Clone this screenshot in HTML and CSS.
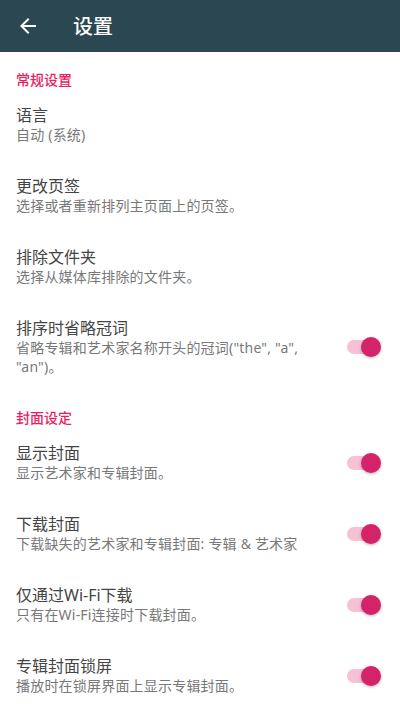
FILE: index.html
```html
<!DOCTYPE html>
<html lang="zh-CN">
<head>
<meta charset="utf-8">
<link rel="stylesheet" href="styles.css">
</head>
<body>
<header class="appbar">
  <svg class="back" width="24" height="24" viewBox="0 0 24 24"><path d="M20 11H7.83l5.59-5.59L12 4l-8 8 8 8 1.41-1.41L7.83 13H20v-2z" fill="#fff"/></svg>
  <h1 class="title">设置</h1>
</header>
<main class="list">
  <div class="section">常规设置</div>
  <div class="row"><div class="text"><div class="t">语言</div><div class="s">自动 (系统)</div></div></div>
  <div class="row"><div class="text"><div class="t">更改页签</div><div class="s">选择或者重新排列主页面上的页签。</div></div></div>
  <div class="row"><div class="text"><div class="t">排除文件夹</div><div class="s">选择从媒体库排除的文件夹。</div></div></div>
  <div class="row"><div class="text"><div class="t">排序时省略冠词</div><div class="s">省略专辑和艺术家名称开头的冠词("the", "a", "an")。</div></div><div class="switch"></div></div>
  <div class="section second">封面设定</div>
  <div class="row"><div class="text"><div class="t">显示封面</div><div class="s">显示艺术家和专辑封面。</div></div><div class="switch"></div></div>
  <div class="row"><div class="text"><div class="t">下载封面</div><div class="s">下载缺失的艺术家和专辑封面: 专辑 &amp; 艺术家</div></div><div class="switch"></div></div>
  <div class="row"><div class="text"><div class="t">仅通过Wi-Fi下载</div><div class="s">只有在Wi-Fi连接时下载封面。</div></div><div class="switch"></div></div>
  <div class="row"><div class="text"><div class="t">专辑封面锁屏</div><div class="s">播放时在锁屏界面上显示专辑封面。</div></div><div class="switch"></div></div>
</main>
</body>
</html>
```
FILE: styles.css
```css
html, body {
  margin: 0;
  padding: 0;
  background: #fff;
  font-family: "Noto Sans", "Noto Sans CJK SC", sans-serif;
  width: 400px;
  height: 720px;
  overflow: hidden;
}
.appbar {
  height: 52px;
  background: #2b4751;
  display: flex;
  align-items: center;
  padding-left: 16px;
  box-sizing: border-box;
}
.back {
  display: block;
  width: 24px;
  height: 24px;
}
.title {
  margin: 0 0 0 33px;
  color: #fff;
  font-size: 20px;
  font-weight: 500;
  line-height: 24px;
  font-family: "Noto Sans CJK SC", sans-serif;
}
.section {
  padding: 17px 16px 0;
  color: #e91e63;
  font-size: 14px;
  font-weight: 500;
  line-height: 20px;
  font-family: "Noto Sans CJK SC", sans-serif;
}
.section.second {
  padding-top: 15px;
}
.row {
  display: flex;
  align-items: center;
  padding: 16px 23px 16px 16px;
}
.text {
  flex: 1;
  padding-right: 31px;
  min-width: 0;
}
.t {
  color: #444;
  font-size: 16px;
  line-height: 20px;
}
.s {
  color: #787878;
  font-size: 14px;
  line-height: 19px;
  letter-spacing: 0.2px;
}
.switch {
  position: relative;
  width: 30px;
  height: 14px;
  border-radius: 7px;
  background: #f6c1d4;
  flex: none;
}
.switch::after {
  content: "";
  position: absolute;
  right: -4px;
  top: -3px;
  width: 20px;
  height: 20px;
  border-radius: 50%;
  background: #d5236a;
  box-shadow: 0 1px 3px rgba(0,0,0,0.3);
}
```
